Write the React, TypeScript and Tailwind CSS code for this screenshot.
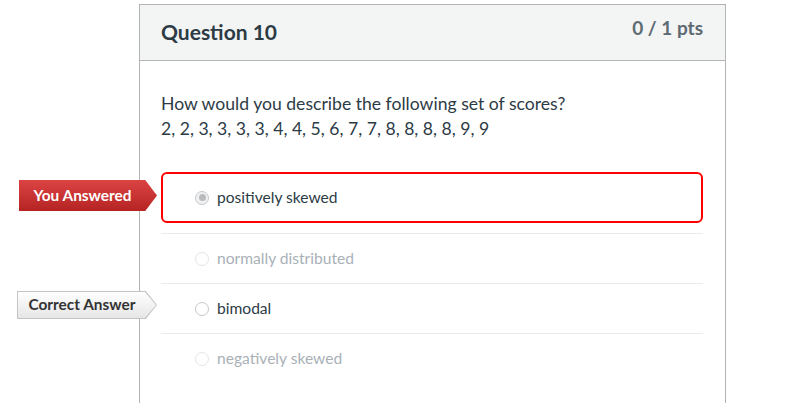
import React from "react";

function Radio({ checked, faded }: { checked?: boolean; faded?: boolean }) {
  if (checked) {
    return (
      <span className="flex h-[14px] w-[14px] shrink-0 items-center justify-center rounded-full border border-[#c4c8cc] bg-[#f1f1f1]">
        <span className="h-[7px] w-[7px] rounded-full bg-[#b9bcbf]" />
      </span>
    );
  }
  return (
    <span
      className={
        "h-[14px] w-[14px] shrink-0 rounded-full border bg-white " +
        (faded ? "border-[#e3e5e7]" : "border-[#c4c8cc]")
      }
    />
  );
}

function Option({
  label,
  checked,
  faded,
}: {
  label: string;
  checked?: boolean;
  faded?: boolean;
}) {
  return (
    <div className="flex items-center gap-[8px] pl-[34px]">
      <Radio checked={checked} faded={faded} />
      <span
        className={
          "text-[15.6px] leading-none " +
          (faded ? "text-[#a9b1b7]" : "text-[#2d3b45]")
        }
      >
        {label}
      </span>
    </div>
  );
}

export default function App() {
  return (
    <div
      className="relative h-[403px] w-[798px] overflow-hidden bg-white"
      style={{ fontFamily: "Lato, 'Noto Sans', sans-serif" }}
    >
      <div className="ml-[139px] mt-[4px] h-[420px] w-[587px] border border-[#b4b4b4] bg-white">
        <div className="flex h-[56px] items-start justify-between border-b border-[#b4b4b4] bg-[#f3f4f4] pl-[21px] pr-[22px]">
          <div className="pt-[14px] text-[21px] font-bold leading-[26px] text-[#2d3b45]">
            Question 10
          </div>
          <div className="pt-[11px] text-[19px] font-bold leading-[24px] text-[#5e6a72]">
            0 / 1 pts
          </div>
        </div>
        <div className="px-[21px] pt-[30px]">
          <div className="text-[17.6px] leading-[25px] text-[#2d3b45]">
            <div>How would you describe the following set of scores?</div>
            <div>2, 2, 3, 3, 3, 3, 4, 4, 5, 6, 7, 7, 8, 8, 8, 8, 9, 9</div>
          </div>
          <div className="mt-[31px] w-[542px]">
            <div className="flex h-[51px] items-center rounded-[6px] border-2 border-[#ff0000]">
              <div className="-ml-[2px]">
                <Option label="positively skewed" checked />
              </div>
            </div>
            <div className="mt-[10px] border-t border-[#e8eaec]">
              <div className="flex h-[50px] items-center border-b border-[#e8eaec]">
                <Option label="normally distributed" faded />
              </div>
              <div className="flex h-[50px] items-center border-b border-[#e8eaec]">
                <Option label="bimodal" />
              </div>
              <div className="flex h-[50px] items-center">
                <Option label="negatively skewed" faded />
              </div>
            </div>
          </div>
        </div>
      </div>

      {/* You Answered label */}
      <div className="absolute left-[19px] top-[180px] h-[31px] w-[138px] bg-gradient-to-b from-[#dc4343] to-[#b52323] shadow-sm [clip-path:polygon(0_0,91.5%_0,100%_50%,91.5%_100%,0_100%)]">
        <div className="flex h-full w-[127px] items-center justify-center text-[15.4px] font-bold text-white">
          You Answered
        </div>
      </div>

      {/* Correct Answer label */}
      <div className="absolute left-[17px] top-[291px] h-[28px] w-[140px] bg-[#c3c3c3] [clip-path:polygon(0_0,92%_0,100%_50%,92%_100%,0_100%)]">
        <div className="absolute inset-[1px] bg-gradient-to-b from-[#ffffff] to-[#e6e6e6] [clip-path:polygon(0_0,92%_0,100%_50%,92%_100%,0_100%)]" />
        <div className="relative flex h-full w-[130px] items-center justify-center text-[15.4px] font-bold text-[#333333]">
          Correct Answer
        </div>
      </div>
    </div>
  );
}
